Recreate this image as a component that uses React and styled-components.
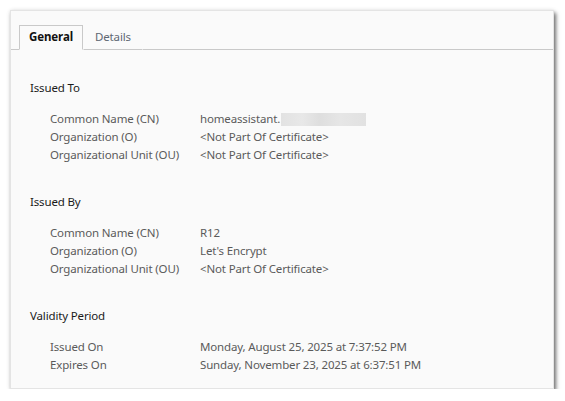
import React from "react";
import styled, { createGlobalStyle } from "styled-components";

const GlobalStyle = createGlobalStyle`
  body {
    margin: 0;
    background: #ffffff;
    font-family: "Noto Sans", "Open Sans", sans-serif;
  }
`;

const sections = [
  {
    title: "Issued To",
    rows: [
      { label: "Common Name (CN)", value: "homeassistant.", redacted: true },
      { label: "Organization (O)", value: "<Not Part Of Certificate>" },
      { label: "Organizational Unit (OU)", value: "<Not Part Of Certificate>" },
    ],
  },
  {
    title: "Issued By",
    rows: [
      { label: "Common Name (CN)", value: "R12" },
      { label: "Organization (O)", value: "Let's Encrypt" },
      { label: "Organizational Unit (OU)", value: "<Not Part Of Certificate>" },
    ],
  },
  {
    title: "Validity Period",
    rows: [
      { label: "Issued On", value: "Monday, August 25, 2025 at 7:37:52 PM" },
      { label: "Expires On", value: "Sunday, November 23, 2025 at 6:37:51 PM" },
    ],
  },
];

const App = () => {
  const [tab, setTab] = React.useState("general");

  return (
    <Page>
      <GlobalStyle />
      <Window>
        <TabBar>
          <Tab active={tab === "general"} onClick={() => setTab("general")}>
            General
          </Tab>
          <Tab active={tab === "details"} onClick={() => setTab("details")}>
            Details
          </Tab>
        </TabBar>
        <Content>
          {sections.map((s) => (
            <Section key={s.title}>
              <SectionTitle>{s.title}</SectionTitle>
              <Rows>
                {s.rows.map((r) => (
                  <Row key={r.label}>
                    <Label>{r.label}</Label>
                    <Value>
                      {r.value}
                      {r.redacted && <Redacted />}
                    </Value>
                  </Row>
                ))}
              </Rows>
            </Section>
          ))}
        </Content>
      </Window>
    </Page>
  );
};

const Page = styled.div`
  padding: 10px 0 0 10px;
`;

const Window = styled.div`
  width: 544px;
  height: 379px;
  box-sizing: border-box;
  background: #fafafa;
  border: 1px solid #e4e4e4;
  box-shadow: 2px 3px 4px rgba(0, 0, 0, 0.55), 0 0 4px rgba(0, 0, 0, 0.1);
  overflow: hidden;
`;

const TabBar = styled.div`
  display: flex;
  align-items: flex-end;
  height: 38px;
  padding-left: 8px;
  border-bottom: 1px solid #c9c9c9;
`;

const Tab = styled.div`
  height: 25px;
  margin-bottom: -1px;
  box-sizing: border-box;
  display: flex;
  align-items: center;
  justify-content: center;
  width: ${(p) => (p.active ? "64px" : "auto")};
  padding: ${(p) => (p.active ? "0 0 2px" : "0 11px 2px")};
  font-size: 11.5px;
  letter-spacing: ${(p) => (p.active ? "-0.1px" : "-0.15px")};
  font-weight: ${(p) => (p.active ? 700 : 400)};
  color: ${(p) => (p.active ? "#111111" : "#5e6773")};
  background: #fafafa;
  border: 1px solid ${(p) => (p.active ? "#c9c9c9" : "transparent")};
  border-bottom: ${(p) => (p.active ? "1px solid #fafafa" : "1px solid #c9c9c9")};
  cursor: default;
`;

const Content = styled.div`
  padding: 0 19px;
`;

const Section = styled.div`
  margin-top: 29px;
`;

const SectionTitle = styled.div`
  font-size: 11.5px;
  letter-spacing: -0.15px;
  line-height: 18px;
  color: #1a1a1a;
`;

const Rows = styled.div`
  margin-top: 13px;
  padding-left: 20px;
`;

const Row = styled.div`
  display: grid;
  grid-template-columns: 150px 1fr;
  font-size: 11.5px;
  letter-spacing: -0.15px;
  line-height: 18px;
  color: #5a5a5a;
`;

const Label = styled.div`
  white-space: nowrap;
`;

const Value = styled.div`
  display: flex;
  align-items: center;
  white-space: nowrap;
`;

const Redacted = styled.span`
  display: inline-block;
  width: 85px;
  height: 13px;
  margin-left: 1px;
  background: linear-gradient(
    90deg,
    #e2e2e2 0%,
    #e8e8e8 25%,
    #dedede 45%,
    #e6e6e6 70%,
    #e1e1e1 100%
  );
`;

export default App;
